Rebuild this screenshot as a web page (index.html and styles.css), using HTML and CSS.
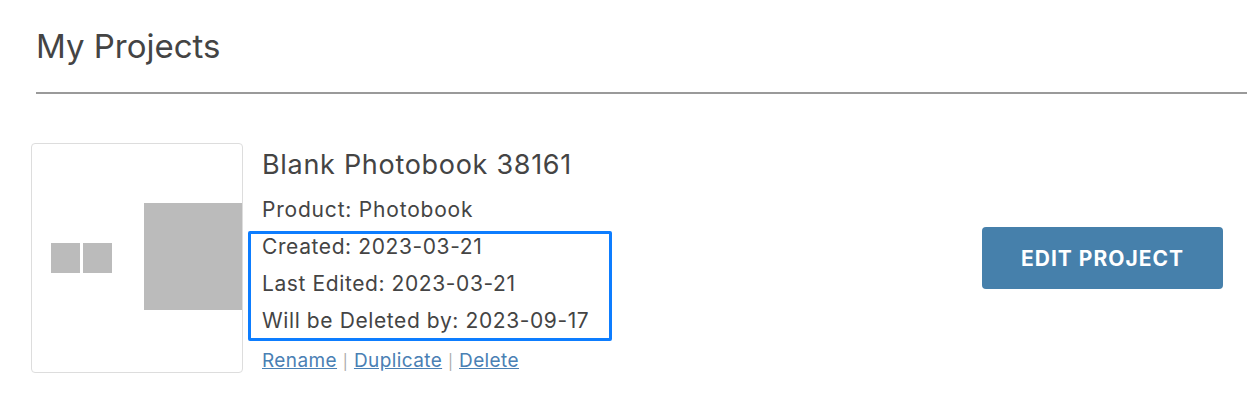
FILE: index.html
```html
<!DOCTYPE html>
<html lang="en">
<head>
  <meta charset="UTF-8">
  <meta name="viewport" content="width=device-width, initial-scale=1.0">
  <title>My Projects</title>
  <link rel="stylesheet" href="styles.css">
</head>
<body>
  <div class="page">
    <h1 class="page-title">My Projects</h1>
    <div class="divider"></div>

    <div class="project">
      <div class="thumb">
        <div class="thumb-spread">
          <div class="mini"></div>
          <div class="mini"></div>
        </div>
        <div class="thumb-cover"></div>
      </div>

      <div class="info">
        <div class="project-name">Blank Photobook 38161</div>
        <div class="line product">Product: Photobook</div>
        <div class="dates">
          <div class="dates-inner">
            <div class="line">Created: 2023-03-21</div>
            <div class="line">Last Edited: 2023-03-21</div>
            <div class="line">Will be Deleted by: 2023-09-17</div>
          </div>
        </div>
        <div class="actions">
          <a href="#">Rename</a> <span class="sep">|</span> <a href="#">Duplicate</a> <span class="sep">|</span> <a href="#">Delete</a>
        </div>
      </div>

      <button class="edit-btn">EDIT PROJECT</button>
    </div>
  </div>
</body>
</html>
```

FILE: styles.css
```css
body {
  margin: 0;
  font-family: Inter, "Open Sans", Arial, sans-serif;
  color: #444;
  background: #fff;
}

.page {
  padding-left: 36px;
}

.page-title {
  margin: 0;
  padding-top: 22px;
  font-size: 33px;
  font-weight: 400;
  line-height: 48px;
  color: #444;
}

.divider {
  height: 2px;
  background-color: #9a9a9a;
  margin-top: 22px;
}

.project {
  display: flex;
  align-items: flex-start;
  margin-top: 49px;
  margin-left: -5px;
  padding-right: 24px;
}

.thumb {
  width: 210px;
  height: 228px;
  border: 1px solid #ddd;
  border-radius: 4px;
  display: flex;
  align-items: center;
  justify-content: space-between;
  overflow: hidden;
  flex-shrink: 0;
}

.thumb-spread {
  display: flex;
  gap: 3px;
  margin-left: 19px;
}

.mini {
  width: 29px;
  height: 30px;
  background-color: #bbb;
}

.thumb-cover {
  width: 98px;
  height: 107px;
  margin-top: -3px;
  background-color: #bbb;
}

.info {
  margin-left: 19px;
  flex: 1;
}

.project-name {
  padding-top: 2px;
  font-size: 27px;
  line-height: 40px;
  letter-spacing: 0.7px;
}

.line {
  font-size: 21px;
  line-height: 37px;
  letter-spacing: 0.6px;
}

.product {
  margin-top: 6px;
  letter-spacing: 0.8px;
}

.dates {
  width: 347px;
  height: 104px;
  margin-top: 3px;
  margin-left: -14px;
  padding-left: 11px;
  border: 3px solid #0d7dff;
  border-radius: 2px;
}

.dates-inner {
  margin-top: -6px;
}

.actions {
  margin-top: 5px;
  font-size: 19px;
  line-height: 30px;
  letter-spacing: 0.4px;
  color: #aaa;
}

.actions a {
  color: #4a80b4;
}

.sep {
  font-size: 15px;
}

.edit-btn {
  margin-top: 84px;
  width: 241px;
  height: 62px;
  background-color: #4680ab;
  border: none;
  border-radius: 4px;
  color: #fff;
  font-family: Inter, "Open Sans", Arial, sans-serif;
  font-size: 21px;
  font-weight: 700;
  letter-spacing: 1px;
  cursor: pointer;
}
```
